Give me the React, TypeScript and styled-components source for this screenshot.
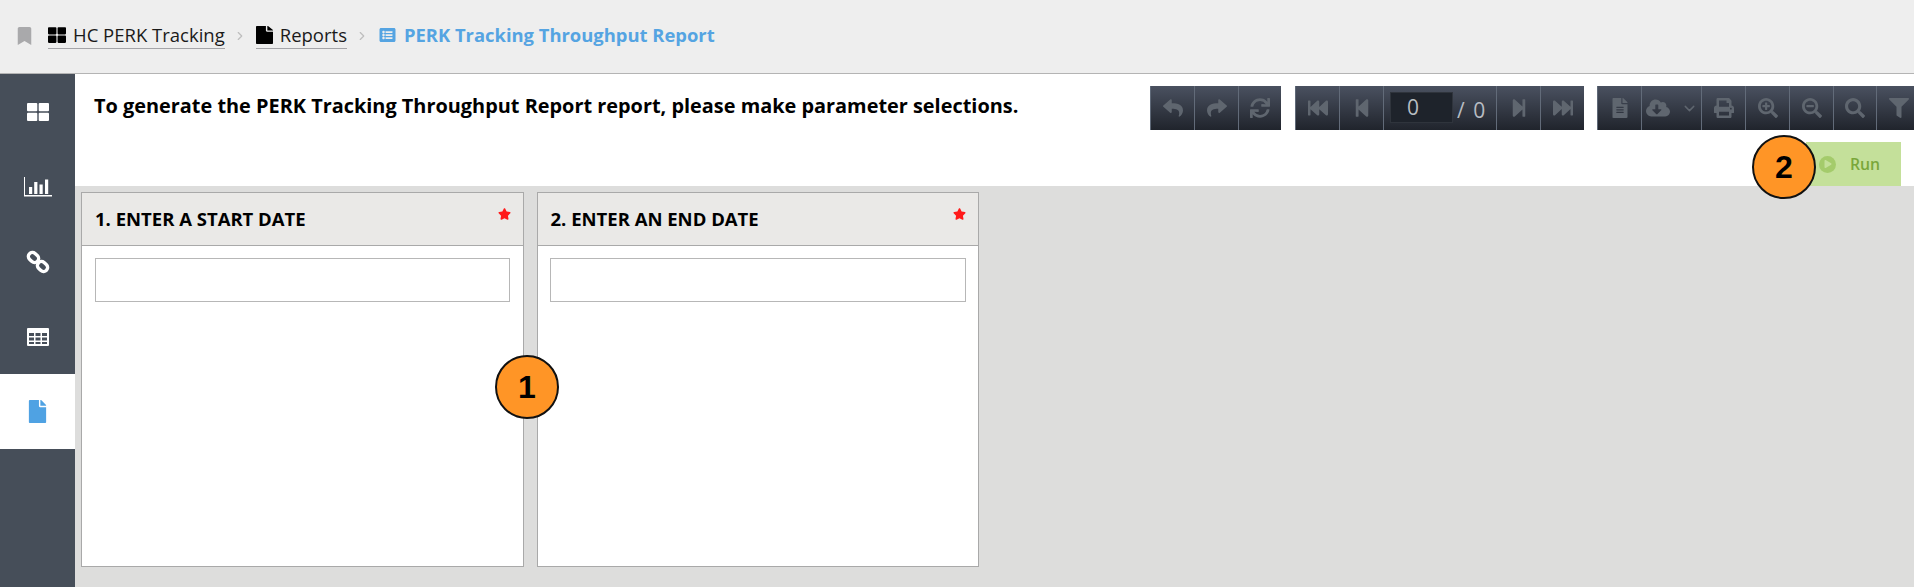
import React from "react";
import styled, { createGlobalStyle } from "styled-components";
import {
  FaBookmark, FaThLarge, FaFile, FaListAlt, FaReply, FaShare, FaSync,
  FaFastBackward, FaStepBackward, FaStepForward, FaFastForward, FaFileAlt, FaCloudDownloadAlt, FaPrint,
  FaSearchPlus, FaSearchMinus, FaSearch, FaFilter, FaStar, FaPlay,
} from "react-icons/fa";
import { FiChevronDown, FiChevronRight } from "react-icons/fi";

const Global = createGlobalStyle`
  html, body { margin: 0; padding: 0; background: #fff; }
  * { box-sizing: border-box; }
  body { font-family: "Open Sans", "Liberation Sans", sans-serif; }
`;

const Page = styled.div`
  position: relative;
  width: 1914px;
  height: 587px;
  overflow: hidden;
  display: flex;
  flex-direction: column;
`;

const TopBar = styled.header`
  height: 74px;
  flex: none;
  background: #eeeeee;
  border-bottom: 1px solid #b4b4b4;
  display: flex;
  align-items: flex-start;
  padding: 21px 0 0 17px;
`;

const BookmarkIcon = styled(FaBookmark)`
  width: 15px;
  height: 18px;
  color: #a9a9ab;
  margin: 6px 16px 0 0;
`;

const Crumb = styled.a`
  display: flex;
  align-items: center;
  gap: 7px;
  height: 28px;
  font-size: 18.5px;
  color: #1a1a1a;
  border-bottom: 1px solid #a4a4a8;
  line-height: 26px;
  svg { color: #000; height: 18px; flex: none; }
`;

const CrumbIconLarge = styled(FaThLarge)`
  width: 18px;
`;

const CrumbIconFile = styled(FaFile).attrs({ preserveAspectRatio: "none" })`
  width: 17px;
`;

const Separator = styled(FiChevronRight)`
  flex: none;
  color: #bdbdbd;
  width: 14px;
  height: 18px;
  margin: 6px 9px 0 8px;
`;

const CurrentCrumb = styled.span`
  display: flex;
  align-items: center;
  gap: 7px;
  height: 28px;
  font-size: 18.4px;
  font-weight: 700;
  color: #55a4e2;
  line-height: 26px;
  svg { width: 19px; height: 16px; flex: none; }
`;

const Body = styled.div`
  flex: 1;
  display: flex;
  min-height: 0;
`;

const Sidebar = styled.nav`
  width: 75px;
  flex: none;
  background: #464e59;
  display: flex;
  flex-direction: column;
`;

const NavItem = styled.div<{ $active?: boolean }>`
  height: 75px;
  display: flex;
  align-items: center;
  justify-content: center;
  color: ${(p) => (p.$active ? "#4fa2e3" : "#ffffff")};
  background: ${(p) => (p.$active ? "#ffffff" : "transparent")};
`;

const Main = styled.main`
  flex: 1;
  min-width: 0;
  display: flex;
  flex-direction: column;
`;

const ReportHead = styled.section`
  height: 112px;
  flex: none;
  background: #fff;
  padding-top: 12px;
  display: flex;
  flex-direction: column;
  gap: 12px;
`;

const ToolRow = styled.div`
  height: 44px;
  display: flex;
  padding-left: 19px;
`;

const Prompt = styled.h1`
  flex: none;
  width: 1056px;
  margin: 0;
  font-size: 19.9px;
  line-height: 26px;
  padding-top: 7px;
  font-weight: 700;
  color: #000;
`;

const ToolGroup = styled.div<{ $gap: number }>`
  flex: none;
  height: 44px;
  display: flex;
  margin-right: ${(p) => p.$gap}px;
  background: linear-gradient(#4a5160, #20242c);
  border-left: 1px solid #5f6978;
`;

const ToolButton = styled.div<{ $w?: number }>`
  flex: none;
  width: ${(p) => p.$w ?? 44}px;
  height: 44px;
  display: flex;
  align-items: center;
  justify-content: center;
  gap: 11px;
  color: #5f666f;
  border-right: 1px solid #626b79;
  &:last-child { border-right: none; }
  svg { width: 20px; height: 20px; }
`;

const CloudGlyph = styled(FaCloudDownloadAlt)`
  && { width: 24px; height: 24px; }
`;

const CaretGlyph = styled(FiChevronDown)`
  && { width: 17px; height: 17px; }
`;

const PagerBox = styled.div`
  flex: none;
  width: 113px;
  height: 44px;
  border-right: 1px solid #626b79;
  display: flex;
  align-items: center;
  padding-left: 6px;
  color: #b8bcc2;
  font-size: 21px;
`;

const PageInput = styled.div`
  width: 63px;
  height: 31px;
  margin-top: -2px;
  background: #1e232b;
  border: 1px solid #2f343c;
  padding-left: 16px;
  line-height: 29px;
  font-size: 21px;
`;

const PageTotal = styled.span`
  margin-left: 4px;
  word-spacing: 3px;
  padding-top: 3px;
`;

const RunRow = styled.div`
  height: 44px;
  display: flex;
  justify-content: flex-end;
  padding-right: 13px;
`;

const RunButton = styled.button`
  width: 95px;
  height: 44px;
  border: none;
  background: #c4e09a;
  color: #7aa73a;
  font: 600 15.8px "Open Sans", sans-serif;
  display: flex;
  align-items: center;
  padding: 0 0 0 13px;
  gap: 14px;
`;

const RunIcon = styled.span`
  width: 17px;
  height: 17px;
  border-radius: 50%;
  background: #a4cb6b;
  color: #c4e09a;
  display: flex;
  align-items: center;
  justify-content: center;
  svg { width: 8px; height: 8px; margin-left: 1px; }
`;

const RunLabel = styled.span`
  margin-top: -1px;
`;

const Canvas = styled.div`
  flex: 1;
  min-height: 0;
  background: #dddddc;
  padding: 6px 0 20px 6px;
  display: flex;
  gap: 13px;
`;

const Card = styled.article`
  width: 442.5px;
  background: #fff;
  border: 1px solid #a9a9a9;
`;

const CardHead = styled.div`
  height: 53px;
  background: #eae9e7;
  border-bottom: 1px solid #a9a9a9;
  display: flex;
  justify-content: space-between;
  padding: 0 12px 0 13px;
`;

const CardTitle = styled.h2`
  margin: 14px 0 0;
  font-size: 18.5px;
  line-height: 24px;
  font-weight: 700;
  color: #000;
`;

const Required = styled(FaStar)`
  width: 13px;
  height: 12px;
  margin-top: 15px;
  color: #ff1a1a;
`;

const CardBody = styled.div`
  padding: 12px 12.5px;
`;

const DateInput = styled.input`
  display: block;
  width: 100%;
  height: 44px;
  border: 1px solid #b7b7b7;
  background: #fff;
  outline: none;
`;

const Badge = styled.div<{ $x: number; $y: number }>`
  position: absolute;
  left: ${(p) => p.$x - 32}px;
  top: ${(p) => p.$y - 32}px;
  width: 64px;
  height: 64px;
  border-radius: 50%;
  background: #ff9526;
  border: 2px solid #111;
  display: flex;
  align-items: center;
  justify-content: center;
  font: 700 32px "Liberation Sans", Arial, sans-serif;
  color: #000;
`;

const GridGlyph = () => (
  <svg width="22" height="18" viewBox="0 0 22 18" fill="currentColor">
    <rect x="0" y="0" width="10.3" height="8.3" rx="1" />
    <rect x="11.7" y="0" width="10.3" height="8.3" rx="1" />
    <rect x="0" y="9.7" width="10.3" height="8.3" rx="1" />
    <rect x="11.7" y="9.7" width="10.3" height="8.3" rx="1" />
  </svg>
);

const ChartGlyph = () => (
  <svg width="28" height="20" viewBox="0 0 28 20" fill="currentColor">
    <path d="M0 0h1v18h27v1.5H0z" />
    <rect x="5" y="10" width="3.2" height="7" />
    <rect x="10.2" y="5" width="3.2" height="12" />
    <rect x="15.5" y="7.5" width="3.2" height="9.5" />
    <rect x="21" y="2.5" width="3.2" height="14.5" />
  </svg>
);

const ChainGlyph = () => (
  <svg width="24" height="24" viewBox="0 0 24 24" fill="none" stroke="currentColor" strokeWidth="3.4">
    <rect x="2" y="3.5" width="11" height="8" rx="4" transform="rotate(42 7.5 7.5)" />
    <rect x="11" y="12.5" width="11" height="8" rx="4" transform="rotate(42 16.5 16.5)" />
  </svg>
);

const TableGlyph = () => (
  <svg width="22" height="18" viewBox="0 0 22 18" fill="currentColor" fillRule="evenodd">
    <path d="M1 0h20a1 1 0 0 1 1 1v16a1 1 0 0 1-1 1H1a1 1 0 0 1-1-1V1a1 1 0 0 1 1-1zM2 5v3h5V5zm6.5 0v3h5V5zM15 5v3h5V5zM2 9.5v3h5v-3zm6.5 0v3h5v-3zm6.5 0v3h5v-3zM2 14v2h5v-2zm6.5 0v2h5v-2zm6.5 0v2h5v-2z" />
  </svg>
);

export default function App() {
  return (
    <Page>
      <Global />
      <TopBar>
        <BookmarkIcon />
        <Crumb><CrumbIconLarge />HC PERK Tracking</Crumb>
        <Separator />
        <Crumb><CrumbIconFile />Reports</Crumb>
        <Separator />
        <CurrentCrumb><FaListAlt />PERK Tracking Throughput Report</CurrentCrumb>
      </TopBar>
      <Body>
        <Sidebar>
          <NavItem><GridGlyph /></NavItem>
          <NavItem><ChartGlyph /></NavItem>
          <NavItem><ChainGlyph /></NavItem>
          <NavItem><TableGlyph /></NavItem>
          <NavItem $active><FaFile size={23} /></NavItem>
        </Sidebar>
        <Main>
          <ReportHead>
            <ToolRow>
              <Prompt>To generate the PERK Tracking Throughput Report report, please make parameter selections.</Prompt>
              <ToolGroup $gap={14}>
                <ToolButton><FaReply /></ToolButton>
                <ToolButton><FaShare /></ToolButton>
                <ToolButton $w={42}><FaSync /></ToolButton>
              </ToolGroup>
              <ToolGroup $gap={13}>
                <ToolButton><FaFastBackward /></ToolButton>
                <ToolButton><FaStepBackward /></ToolButton>
                <PagerBox>
                  <PageInput>0</PageInput>
                  <PageTotal>/ 0</PageTotal>
                </PagerBox>
                <ToolButton><FaStepForward /></ToolButton>
                <ToolButton $w={43}><FaFastForward /></ToolButton>
              </ToolGroup>
              <ToolGroup $gap={0}>
                <ToolButton><FaFileAlt /></ToolButton>
                <ToolButton $w={60}><CloudGlyph /><CaretGlyph /></ToolButton>
                <ToolButton><FaPrint /></ToolButton>
                <ToolButton><FaSearchPlus /></ToolButton>
                <ToolButton><FaSearchMinus /></ToolButton>
                <ToolButton $w={43}><FaSearch /></ToolButton>
                <ToolButton><FaFilter /></ToolButton>
              </ToolGroup>
            </ToolRow>
            <RunRow>
              <RunButton>
                <RunIcon><FaPlay /></RunIcon>
                <RunLabel>Run</RunLabel>
              </RunButton>
            </RunRow>
          </ReportHead>
          <Canvas>
            <Card>
              <CardHead><CardTitle>1. ENTER A START DATE</CardTitle><Required /></CardHead>
              <CardBody><DateInput /></CardBody>
            </Card>
            <Card>
              <CardHead><CardTitle>2. ENTER AN END DATE</CardTitle><Required /></CardHead>
              <CardBody><DateInput /></CardBody>
            </Card>
          </Canvas>
        </Main>
      </Body>
      <Badge $x={527} $y={387}>1</Badge>
      <Badge $x={1784} $y={167}>2</Badge>
    </Page>
  );
}
